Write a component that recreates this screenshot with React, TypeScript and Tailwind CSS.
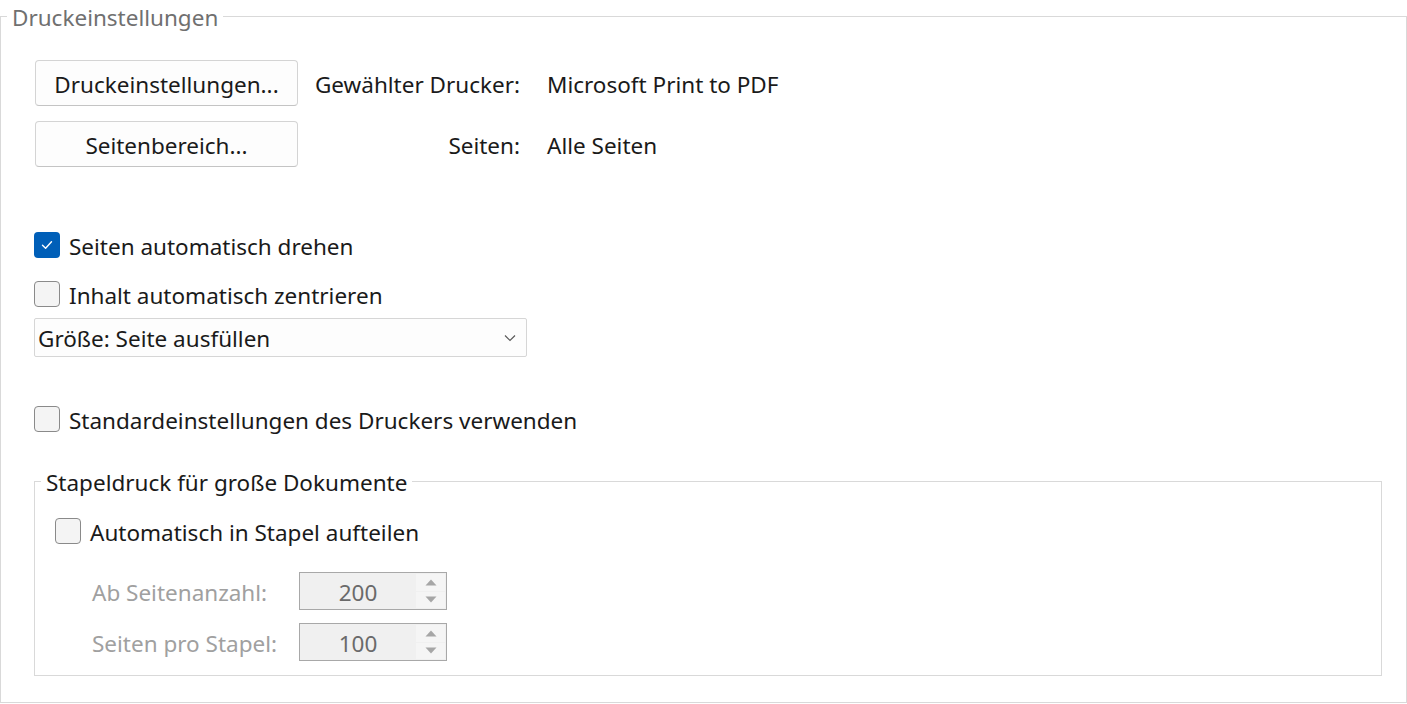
import { ReactNode } from "react";

const font = { fontFamily: '"Noto Sans", "Open Sans", sans-serif' };

function Checkbox({ checked, label }: { checked?: boolean; label: string }) {
  return (
    <div className="flex h-[34px] items-center">
      {checked ? (
        <span className="flex h-[26px] w-[26px] items-center justify-center rounded-[4px] bg-[#005fb8]">
          <svg width="14" height="14" viewBox="0 0 14 14">
            <path d="M2.5 7.2 L5.6 10.2 L11.5 3.8" fill="none" stroke="#fff" strokeWidth="1.4" strokeLinecap="round" strokeLinejoin="round" />
          </svg>
        </span>
      ) : (
        <span className="h-[26px] w-[26px] rounded-[4px] border border-[#8a8a8a] bg-[#f4f4f4]" />
      )}
      <span className="ml-[9px] pt-[3px] text-[#1a1a1a]">{label}</span>
    </div>
  );
}

function Button({ children }: { children: ReactNode }) {
  return (
    <button className="ml-px flex h-[46px] w-[263px] items-center justify-center rounded-[4px] border border-[#d4d4d4] border-b-[#c4c4c4] bg-[#fdfdfd] pt-[3px] text-[#1a1a1a]">
      {children}
    </button>
  );
}

function Spinner({ label, value }: { label: string; value: string }) {
  return (
    <div className="flex items-center">
      <span className="w-[244px] shrink-0 whitespace-nowrap pl-[37px] pt-[3px] text-[#a0a0a0]">{label}</span>
      <div className="flex h-[38px] w-[148px] border border-[#a8a8a8] bg-[#f0f0f0]">
        <div className="flex flex-1 items-center justify-center pt-[3px] text-[#6a6a6a]">{value}</div>
        <div className="flex w-[30px] flex-col gap-px py-px pr-px">
          <div className="flex flex-1 items-center justify-center bg-[#f5f5f5]">
            <svg width="12" height="7" viewBox="0 0 12 7">
              <path d="M6 0.5 L11.5 6.5 L0.5 6.5 Z" fill="#a6a6a6" />
            </svg>
          </div>
          <div className="flex flex-1 items-center justify-center bg-[#f5f5f5]">
            <svg width="12" height="7" viewBox="0 0 12 7">
              <path d="M0.5 0.5 L11.5 0.5 L6 6.5 Z" fill="#a6a6a6" />
            </svg>
          </div>
        </div>
      </div>
    </div>
  );
}

export default function App() {
  return (
    <div className="h-[704px] w-[1407px] bg-white text-[22.5px]" style={font}>
      <fieldset className="h-[703px] border border-[#d9d9d9]">
        <legend className="ml-[6px] h-[32px] px-[5px] pt-[2px] leading-[32px] text-[#707070]">Druckeinstellungen</legend>

        <div className="pl-[33px] pr-[24px]">
          <div className="mt-[28px] flex flex-col gap-[15px]">
            <div className="flex items-center">
              <Button>Druckeinstellungen...</Button>
              <span className="w-[222px] pt-[3px] text-right text-[#1a1a1a]">Gewählter Drucker:</span>
              <span className="ml-[27px] pt-[3px] text-[#1a1a1a]">Microsoft Print to PDF</span>
            </div>
            <div className="flex items-center">
              <Button>Seitenbereich...</Button>
              <span className="w-[222px] pt-[3px] text-right text-[#1a1a1a]">Seiten:</span>
              <span className="ml-[27px] pt-[3px] text-[#1a1a1a]">Alle Seiten</span>
            </div>
          </div>

          <div className="mt-[61px] flex flex-col gap-[15px]">
            <Checkbox checked label="Seiten automatisch drehen" />
            <Checkbox label="Inhalt automatisch zentrieren" />
          </div>

          <div className="mt-[7px] flex h-[39px] w-[493px] items-center justify-between rounded-[2px] border border-[#d6d6d6] bg-[#fdfdfd] pl-[3px] pr-[10px] text-[#1a1a1a]">
            <span className="pt-[3px]">Größe: Seite ausfüllen</span>
            <svg width="12" height="8" viewBox="0 0 12 8">
              <path d="M1 1.5 L6 6.5 L11 1.5" fill="none" stroke="#5a5a5a" strokeWidth="1.2" />
            </svg>
          </div>

          <div className="mt-[45px]">
            <Checkbox label="Standardeinstellungen des Druckers verwenden" />
          </div>

          <fieldset className="mt-[29px] border border-[#d9d9d9]">
            <legend className="ml-[6px] h-[32px] px-[5px] pt-[2px] leading-[32px] text-[#1a1a1a]">Stapeldruck für große Dokumente</legend>
            <div className="pb-[14px] pl-[20px]">
              <div className="mt-[17px]">
                <Checkbox label="Automatisch in Stapel aufteilen" />
              </div>
              <div className="mt-[24px] flex flex-col gap-[13px]">
                <Spinner label="Ab Seitenanzahl:" value="200" />
                <Spinner label="Seiten pro Stapel:" value="100" />
              </div>
            </div>
          </fieldset>
        </div>
      </fieldset>
    </div>
  );
}
